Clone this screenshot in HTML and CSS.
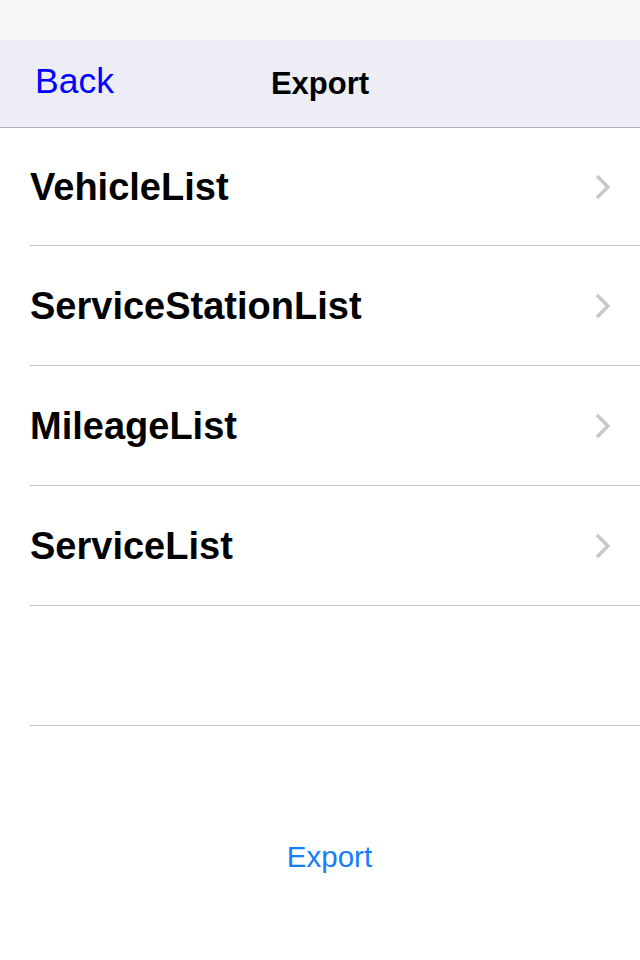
FILE: index.html
```html
<!DOCTYPE html>
<html>
<head>
<meta charset="utf-8">
<link rel="stylesheet" href="styles.css">
</head>
<body>
<div class="screen">
  <div class="status"></div>
  <div class="navbar">
    <span class="back">Back</span>
    <span class="title">Export</span>
  </div>
  <ul class="list">
    <li class="row"><span class="label">VehicleList</span><svg class="chev" width="18" height="26" viewBox="0 0 18 26"><path d="M3 2 L14 13 L3 24" fill="none" stroke="#c7c7cc" stroke-width="3.4"/></svg></li>
    <li class="row"><span class="label">ServiceStationList</span><svg class="chev" width="18" height="26" viewBox="0 0 18 26"><path d="M3 2 L14 13 L3 24" fill="none" stroke="#c7c7cc" stroke-width="3.4"/></svg></li>
    <li class="row"><span class="label">MileageList</span><svg class="chev" width="18" height="26" viewBox="0 0 18 26"><path d="M3 2 L14 13 L3 24" fill="none" stroke="#c7c7cc" stroke-width="3.4"/></svg></li>
    <li class="row"><span class="label">ServiceList</span><svg class="chev" width="18" height="26" viewBox="0 0 18 26"><path d="M3 2 L14 13 L3 24" fill="none" stroke="#c7c7cc" stroke-width="3.4"/></svg></li>
    <li class="row empty"></li>
  </ul>
  <div class="action">
    <span class="export-btn">Export</span>
  </div>
</div>
</body>
</html>
```

FILE: styles.css
```css
html, body {
  margin: 0;
  padding: 0;
  background: #ffffff;
  font-family: "Liberation Sans", Arial, sans-serif;
}
.screen {
  width: 640px;
  height: 960px;
  background: #ffffff;
  display: flex;
  flex-direction: column;
}
.status {
  height: 40px;
  background: #f7f7f7;
}
.navbar {
  height: 87px;
  background: #ededf6;
  border-bottom: 1px solid #b2b2b2;
  display: flex;
  align-items: center;
  justify-content: center;
  position: relative;
}
.back {
  position: absolute;
  left: 35px;
  top: 21px;
  font-size: 35.5px;
  color: #0000ff;
}
.title {
  font-size: 31px;
  font-weight: bold;
  color: #000;
  margin-top: 1px;
}
.list {
  list-style: none;
  margin: 0;
  padding: 0 0 0 30px;
}
.row {
  height: 119px;
  border-bottom: 1px solid #c8c7cc;
  display: flex;
  align-items: center;
  justify-content: space-between;
  padding-right: 28px;
}
.row:first-child {
  height: 117px;
}
.label {
  font-size: 38px;
  font-weight: bold;
  color: #000;
  padding-top: 2px;
}
.chev {
  display: block;
}
.action {
  display: flex;
  justify-content: center;
  padding-top: 114px;
  padding-left: 19px;
}
.export-btn {
  font-size: 29.5px;
  color: #157efb;
}
```
